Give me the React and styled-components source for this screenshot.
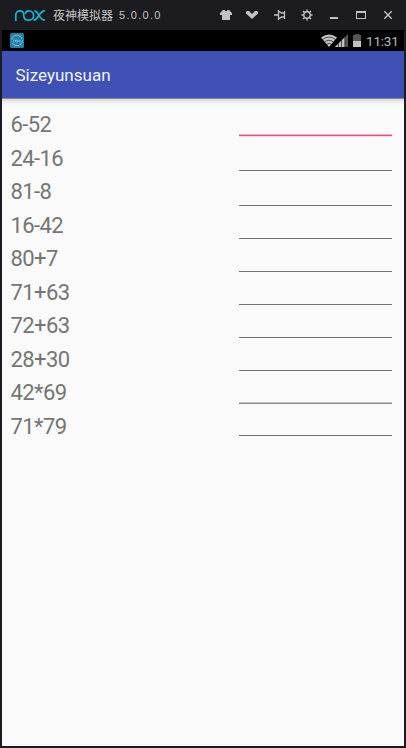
import React, { useState } from "react";
import styled, { createGlobalStyle } from "styled-components";

const GlobalStyle = createGlobalStyle`
  * {
    box-sizing: border-box;
  }
  body {
    margin: 0;
    background: #1c1b20;
    font-family: Roboto, "Noto Sans", sans-serif;
  }
`;

const Window = styled.div`
  width: 406px;
  height: 748px;
  display: flex;
  flex-direction: column;
  padding: 0 2px 2px;
  background: #1c1b20;
  overflow: hidden;
`;

const TitleBar = styled.header`
  height: 30px;
  flex: none;
  display: flex;
  align-items: center;
  justify-content: space-between;
  padding: 0 8px 0 12px;
`;

const Brand = styled.div`
  display: flex;
  align-items: center;
  color: #c6c6c6;
`;

const BrandName = styled.span`
  margin-left: 8px;
  font: 12px/16px "Noto Sans CJK SC", sans-serif;
`;

const Version = styled.span`
  margin-left: 6px;
  font: 11px/16px "Liberation Sans", sans-serif;
  letter-spacing: 1.3px;
`;

const Controls = styled.div`
  display: flex;
  gap: 11px;
`;

const Control = styled.button`
  width: 16px;
  height: 16px;
  padding: 0;
  border: none;
  background: none;
  color: #c3c3c3;

  svg {
    display: block;
  }
`;

const StatusBar = styled.div`
  height: 21px;
  flex: none;
  display: flex;
  align-items: center;
  justify-content: space-between;
  padding: 0 5px 0 8px;
  background: #000;
`;

const StatusIcons = styled.div`
  display: flex;
  align-items: center;
`;

const Clock = styled.span`
  width: 33px;
  margin-left: 4px;
  padding-top: 1px;
  color: #b9b9b9;
  font-size: 13.5px;
  letter-spacing: -0.2px;
  line-height: 20px;
  white-space: nowrap;
`;

const AppBar = styled.div`
  height: 47px;
  flex: none;
  display: flex;
  align-items: center;
  padding: 1px 13.5px 0;
  background: #3f51b5;
  color: #f3f4fb;
  font-size: 17px;
`;

const Content = styled.main`
  flex: 1;
  display: flex;
  justify-content: space-between;
  padding: 9px 12px 0 8px;
  background: linear-gradient(#8a8a8a 0, #8a8a8a 1px, #d5d5d5 1px, #e9e9e9 3px, #fafafa 7px);
`;

const Questions = styled.div`
  display: flex;
  flex-direction: column;
  padding-top: 1px;
`;

const Question = styled.label`
  height: 33.55px;
  padding-left: 0.5px;
  color: #757575;
  font-size: 22px;
  letter-spacing: -0.6px;
  line-height: 34px;
`;

const Answers = styled.div`
  width: 153px;
  display: flex;
  flex-direction: column;
`;

const Answer = styled.input`
  width: 100%;
  height: ${(p) => p.$height}px;
  flex: none;
  padding: 0;
  border: none;
  border-radius: 0;
  outline: none;
  background: linear-gradient(${(p) => p.$line}) bottom / 100% ${(p) => p.$thickness || 1}px no-repeat;
  color: #212121;
  font: 18px Roboto, sans-serif;
`;

const GREY = "#727272, #727272";
const PINK = "#f9b4cb 0, #f9b4cb 1px, #ff4081 1px, #ff4081 2px, #f8d8e2 2px";
const SOFT = "#c3c3c3 0, #c3c3c3 1px, #8b8b8b 1px";

const rows = [
  { text: "6-52", height: 30, line: PINK, thickness: 3 },
  { text: "24-16", height: 34, line: GREY },
  { text: "81-8", height: 35, line: GREY },
  { text: "16-42", height: 33, line: GREY },
  { text: "80+7", height: 33, line: GREY },
  { text: "71+63", height: 33, line: GREY },
  { text: "72+63", height: 33, line: GREY },
  { text: "28+30", height: 33, line: GREY },
  { text: "42*69", height: 33, line: SOFT, thickness: 2 },
  { text: "71*79", height: 32, line: GREY },
];

function NoxLogo() {
  return (
    <svg width="31" height="13" viewBox="0 0 31 13" fill="none" stroke="#12b5cf" strokeWidth="1.7">
      <path d="M1.8 12V6C1.8 0.4 9.8 0.4 9.8 6V7C9.8 10 11.5 11.2 14.8 11.2C21.2 11.2 21.2 1.8 14.8 1.8C12.5 1.8 11.5 3 11.5 5" />
      <path d="M20.5 1.8C24.5 1.8 25 11.2 30.8 11.2M30.8 1.8C25 1.8 24.5 11.2 19.5 11.2" />
    </svg>
  );
}

function ShirtIcon() {
  return (
    <svg width="16" height="16" fill="currentColor">
      <path d="M5 3h2v1h2V3h2l3 3v2h-2v5H4V8H2V6z" />
    </svg>
  );
}

function ChevronIcon() {
  return (
    <svg width="16" height="16" fill="currentColor">
      <path d="M3 4h2l3 3 3-3h2l1 1v1.5L8 12 2 6.5V5z" transform="translate(-1 0)" />
    </svg>
  );
}

function PinIcon() {
  return (
    <svg width="16" height="16" fill="none" stroke="currentColor" strokeWidth="1.3">
      <path d="M2 8h5M6.5 3v10M6.5 4l3 2h3M6.5 12l3-2h3M12.5 4v8" />
    </svg>
  );
}

function GearIcon() {
  return (
    <svg width="16" height="16" fill="none" stroke="currentColor" strokeWidth="1.4">
      <circle cx="8" cy="8" r="3.2" />
      <path d="M8 2.5v2M8 11.5v2M2.5 8h2M11.5 8h2M4 4l1.5 1.5M10.5 10.5L12 12M4 12l1.5-1.5M10.5 5.5L12 4" />
    </svg>
  );
}

function MinimizeIcon() {
  return (
    <svg width="16" height="16" fill="currentColor">
      <path d="M4 10h8v2H4z" />
    </svg>
  );
}

function MaximizeIcon() {
  return (
    <svg width="16" height="16" fill="currentColor">
      <path fillRule="evenodd" d="M3 4h10v8H3zM4 6v5h8V6z" />
    </svg>
  );
}

function CloseIcon() {
  return (
    <svg width="16" height="16" fill="none" stroke="currentColor" strokeWidth="1.4">
      <path d="M4.3 4.3l7.4 7.4M11.7 4.3l-7.4 7.4" />
    </svg>
  );
}

function AppBadge() {
  return (
    <svg width="14" height="15" viewBox="0 0 14 15" fill="none">
      <rect width="14" height="15" rx="1.5" fill="#2380a6" />
      <circle cx="7" cy="7.5" r="5.3" stroke="#87bfd2" strokeWidth="1" strokeDasharray="14 3" />
      <path d="M3.5 9V7h2v2M6 7h2v2H6zM8.7 7l2 2M10.7 7l-2 2" stroke="#a5d2df" strokeWidth="0.5" />
    </svg>
  );
}

function SignalIcons() {
  return (
    <svg width="41" height="15" viewBox="0 0 41 15" fill="none">
      <path d="M0 4.5Q8 -1.5 16 4.5L8 14z" fill="#c2c2c2" />
      <path d="M1.5 6.5Q8 1.5 14.5 6.5M3.5 9Q8 5.5 12.5 9M5.5 11.3Q8 9.5 10.5 11.3" stroke="#000" strokeWidth="0.6" />
      <path d="M14 14L27 1v13z" fill="#555" />
      <path d="M14 14L24 4v10z" fill="#c2c2c2" />
      <path d="M17.5 8v6M20.5 5v9M23.8 2v12" stroke="#000" strokeWidth="0.6" />
      <path d="M34 1h4v1h2v6h-8V2h2z" fill="#555" />
      <path d="M32 8h8v6h-8z" fill="#c2c2c2" />
    </svg>
  );
}

const controls = [
  ["Theme", ShirtIcon],
  ["More", ChevronIcon],
  ["Pin", PinIcon],
  ["Settings", GearIcon],
  ["Minimize", MinimizeIcon],
  ["Maximize", MaximizeIcon],
  ["Close", CloseIcon],
];

function App() {
  const [answers, setAnswers] = useState({});

  function handleChange(e) {
    setAnswers({ ...answers, [e.target.id]: e.target.value });
  }

  return (
    <Window>
      <GlobalStyle />
      <TitleBar>
        <Brand>
          <NoxLogo />
          <BrandName>夜神模拟器</BrandName>
          <Version>5.0.0.0</Version>
        </Brand>
        <Controls>
          {controls.map(([name, Icon]) => (
            <Control key={name} aria-label={name}>
              <Icon />
            </Control>
          ))}
        </Controls>
      </TitleBar>
      <StatusBar>
        <AppBadge />
        <StatusIcons>
          <SignalIcons />
          <Clock>11:31</Clock>
        </StatusIcons>
      </StatusBar>
      <AppBar>Sizeyunsuan</AppBar>
      <Content>
        <Questions>
          {rows.map((row) => (
            <Question key={row.text} htmlFor={row.text}>
              {row.text}
            </Question>
          ))}
        </Questions>
        <Answers>
          {rows.map((row) => (
            <Answer
              key={row.text}
              id={row.text}
              value={answers[row.text] || ""}
              onChange={handleChange}
              $height={row.height}
              $line={row.line}
              $thickness={row.thickness}
            />
          ))}
        </Answers>
      </Content>
    </Window>
  );
}

export default App;
